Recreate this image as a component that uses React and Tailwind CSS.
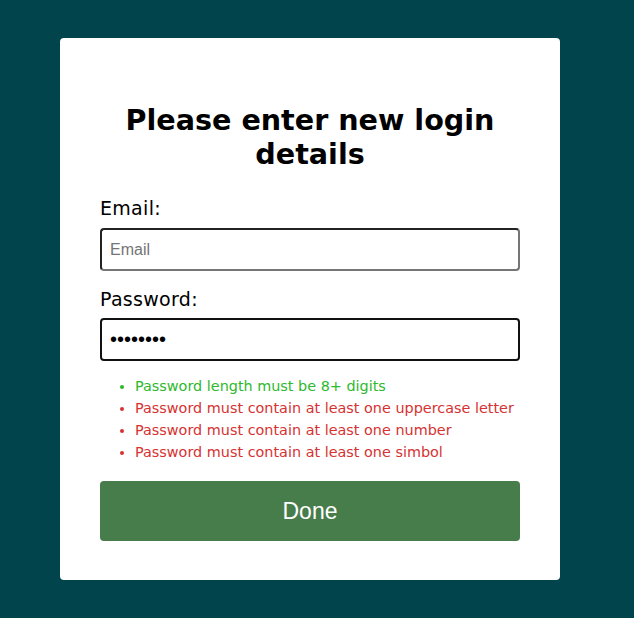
export default function App() {
  const rules = [
    { text: "Password length must be 8+ digits", ok: true },
    { text: "Password must contain at least one uppercase letter", ok: false },
    { text: "Password must contain at least one number", ok: false },
    { text: "Password must contain at least one simbol", ok: false },
  ];

  return (
    <div className="min-h-[618px] w-full bg-[#01444b] pt-[38px] pb-[38px] font-['DejaVu_Sans',sans-serif]">
      <div className="ml-[60px] w-[500px] rounded-[4px] bg-white px-[40px] pt-[65px] pb-[39px]">
        <h1 className="text-center text-[28.6px] leading-[34px] font-bold text-black">
          Please enter new login details
        </h1>
        <form className="mt-[25px] flex flex-col" onSubmit={(e) => e.preventDefault()}>
          <label className="text-[19px] leading-[24px] tracking-[0.3px] text-black">Email:</label>
          <input
            type="email"
            placeholder="Email"
            className="mt-[8px] h-[43px] w-full rounded-[4px] border-2 border-t-[#222] border-l-[#222] border-r-[#767676] border-b-[#767676] px-[8px] font-['Liberation_Sans',sans-serif] text-[16px] text-black placeholder:text-[#757575] outline-none"
          />
          <label className="mt-[16px] text-[19px] leading-[24px] tracking-[0.3px] text-black">Password:</label>
          <input
            type="password"
            defaultValue="abcdefgh"
            className="mt-[7px] h-[43px] w-full rounded-[4px] border-2 border-[#111] px-[8px] font-['Liberation_Sans',sans-serif] text-[20px] text-black outline-none"
          />
          <ul className="mt-[14px] list-disc pl-[35px] text-[14.4px] leading-[22px]">
            {rules.map((r) => (
              <li
                key={r.text}
                className={r.ok ? "text-[#2eb82e] marker:text-[#2eb82e]" : "text-[#d63232] marker:text-[#d63232]"}
              >
                {r.text}
              </li>
            ))}
          </ul>
          <button
            type="submit"
            className="mt-[18px] h-[60px] w-full rounded-[4px] bg-[#477c4b] font-['Liberation_Sans',sans-serif] text-[23px] text-white"
          >
            Done
          </button>
        </form>
      </div>
    </div>
  );
}
